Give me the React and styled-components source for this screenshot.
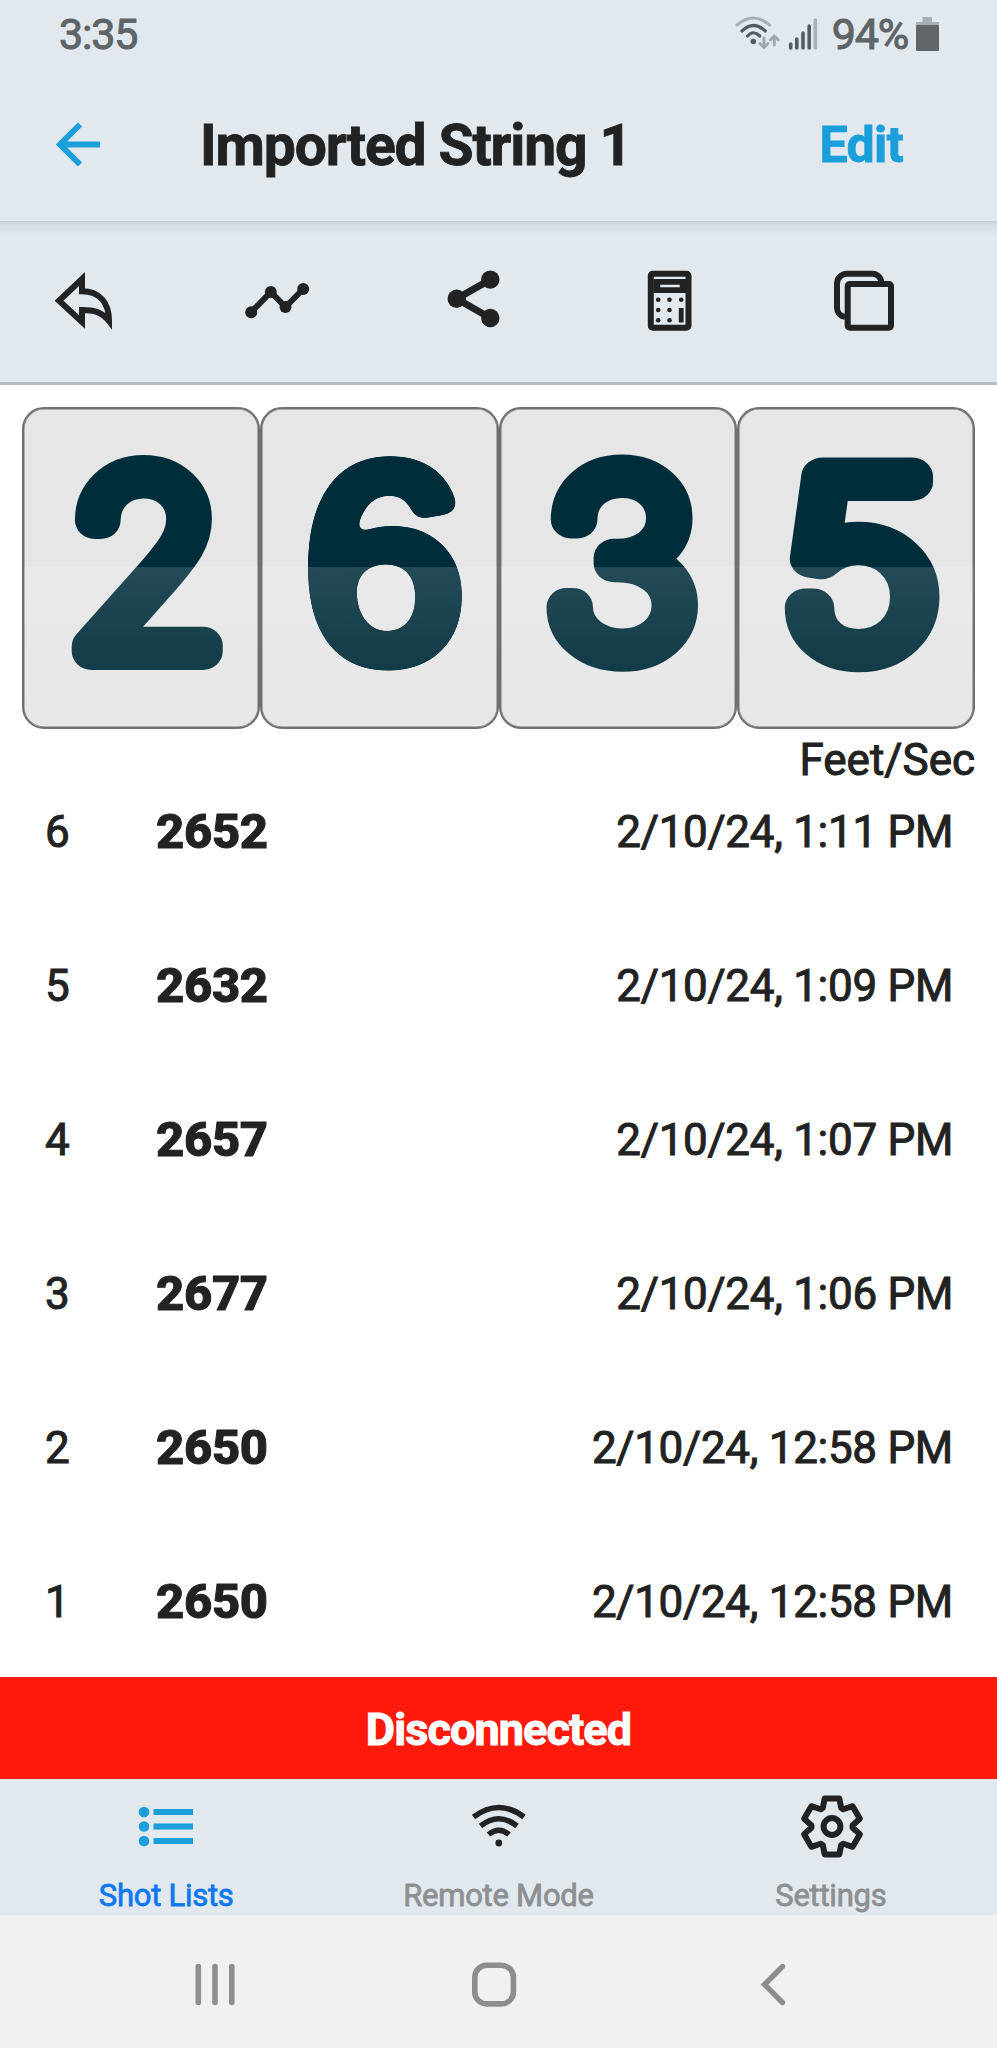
import styled, { createGlobalStyle } from 'styled-components';

const GlobalStyle = createGlobalStyle`
  * {
    box-sizing: border-box;
  }

  body {
    margin: 0;
    background: #ffffff;
    font-family: Roboto, "Liberation Sans", sans-serif;
    color: #222222;
  }
`

const Screen = styled.div`
  display: flex;
  flex-direction: column;
  width: 997px;
  height: 2048px;
  overflow: hidden;
  background: #ffffff;
`

const StatusBar = styled.div`
  display: flex;
  align-items: center;
  height: 68px;
  padding: 0 58px 0 59px;
  background: #e1e8ee;
  color: #5f6467;
  font-size: 43px;
  line-height: 68px;
  font-weight: 400;
  letter-spacing: -1.2px;
  -webkit-text-stroke: 1px #5f6467;

  svg {
    display: block;
  }
`

const Clock = styled.span`
  flex: 1;
`

const Battery = styled.span`
  margin: 0 8px 0 14px;
`

const Header = styled.header`
  display: flex;
  align-items: center;
  height: 153px;
  flex-shrink: 0;
  padding: 0 94px 0 45px;
  background: #e1e8ee;

  h1 {
    flex: 1;
    margin: 2px 0 0 91px;
    font-size: 57px;
    font-weight: 700;
    letter-spacing: -1.15px;
    -webkit-text-stroke: 0.8px #222222;
  }
`

const EditButton = styled.button`
  padding: 0;
  border: 0;
  background: none;
  color: #1a9fda;
  font-family: inherit;
  font-size: 50px;
  font-weight: 700;
  letter-spacing: -0.6px;
  -webkit-text-stroke: 0.8px #1a9fda;
`

const Toolbar = styled.div`
  display: flex;
  gap: 131.5px;
  height: 164px;
  flex-shrink: 0;
  padding: 47px 0 0 51px;
  border-bottom: 3px solid #b6bac1;
  background: linear-gradient(#c6cdd5, #d6dde4 4px, #e1e8ee 16px);
`

const Icon = styled.svg`
  display: block;
  flex-shrink: 0;
  width: 64px;
  height: 64px;
  overflow: visible;
  fill: none;
  stroke: ${props => props.$color || '#222222'};
  stroke-width: ${props => props.$stroke || 6};
  stroke-miterlimit: 10;

  .solid {
    fill: ${props => props.$color || '#222222'};
    stroke: none;
  }
`

const Counter = styled.div`
  display: grid;
  grid-template-columns: repeat(4, 1fr);
  height: 322px;
  flex-shrink: 0;
  margin: 22px 22px 0;
`

const Card = styled.div`
  overflow: hidden;
  border: 2px solid #707070;
  border-radius: 22px;
  background: #e6e6e6;
  box-shadow: inset 0 0 0 0.5px #707070;

  svg {
    display: block;
    margin: -2px 0 0 -2px;
  }
`

const Numeral = styled.text`
  font-family: ${props => props.$soft ? '"Liberation Sans", Arial' : 'Inter, "Liberation Sans"'}, sans-serif;
  font-size: ${props => props.$soft ? '275px' : '240px'};
  font-weight: ${props => props.$soft ? 400 : 100};
  text-anchor: middle;
  fill: #002d3a;
  stroke: #002d3a;
  stroke-width: ${props => props.$soft ? '20px' : '38px'};
  stroke-linejoin: round;
`

const Unit = styled.div`
  height: 62px;
  flex-shrink: 0;
  padding-right: 22px;
  text-align: right;
  font-size: 44px;
  line-height: 62px;
  font-weight: 400;
  -webkit-text-stroke: 1px #222222;
`

const ShotList = styled.ul`
  flex: 1;
  min-height: 0;
  margin: 0;
  padding: 0 44px 0 45px;
  overflow: hidden;
  list-style: none;
`

const ShotRow = styled.li`
  display: flex;
  height: 154px;
  font-size: 44px;
  line-height: 82px;
  font-weight: 400;
  letter-spacing: -0.3px;
  -webkit-text-stroke: 1px #222222;

  .number {
    width: 111px;
  }

  .speed {
    flex: 1;
    font-size: 49px;
    font-weight: 800;
  }
`

const ConnectionBar = styled.div`
  height: 102px;
  flex-shrink: 0;
  padding-top: 3px;
  background: #ff1a0c;
  color: #ffffff;
  text-align: center;
  font-size: 45px;
  line-height: 100px;
  font-weight: 700;
  letter-spacing: -0.9px;
  -webkit-text-stroke: 1px #ffffff;
`

const TabBar = styled.nav`
  display: grid;
  grid-template-columns: repeat(3, 1fr);
  height: 136px;
  flex-shrink: 0;
  background: #e1e8ee;
`

const Tab = styled.div`
  display: flex;
  flex-direction: column;
  align-items: center;
  gap: 17px;
  padding-top: 16px;
  color: ${props => props.$active ? '#0f78ee' : '#8d9092'};
  font-size: 31px;
  line-height: 40px;
  font-weight: 400;
  letter-spacing: -0.25px;
  -webkit-text-stroke: 0.8px currentColor;
`

const SystemNav = styled.div`
  display: flex;
  gap: 215px;
  height: 133px;
  flex-shrink: 0;
  padding: 38px 0 0 183px;
  background: #f1f1f1;
`

const shots = [
  { number: 6, speed: 2652, time: '2/10/24, 1:11 PM' },
  { number: 5, speed: 2632, time: '2/10/24, 1:09 PM' },
  { number: 4, speed: 2657, time: '2/10/24, 1:07 PM' },
  { number: 3, speed: 2677, time: '2/10/24, 1:06 PM' },
  { number: 2, speed: 2650, time: '2/10/24, 12:58 PM' },
  { number: 1, speed: 2650, time: '2/10/24, 12:58 PM' },
];

// the flip digits are not equally wide, so each one has its own stretch
const digits = [
  { value: '2', x: 125, y: 243.5, stretch: 1.055 },
  { value: '6', x: 124, y: 251, stretch: 1.05, soft: true },
  { value: '3', x: 122.5, y: 243.5, stretch: 1.07 },
  { value: '5', x: 123.5, y: 244, stretch: 1.14 },
];

// six teeth, each one turned 60 degrees from the last
function gearPath() {
    const tooth = [[-9.2, -18.5], [-7.3, -28], [7.3, -28], [9.2, -18.5]];
    const points = [];

    for (let i = 0; i < 6; i++) {
        const a = i * Math.PI / 3;
        tooth.forEach(([x, y]) => {
            const px = 33 + x * Math.cos(a) - y * Math.sin(a);
            const py = 31.5 + x * Math.sin(a) + y * Math.cos(a);
            points.push(`${px.toFixed(2)} ${py.toFixed(2)}`);
        });
    }
    return `M${points.join('L')}Z`;
}

function StatusIcons() {
    return (
        <>
            <svg width="46" height="40" viewBox="0 0 46 40" fill="none" strokeLinecap="round">
                <path d="M2 11Q18.3-3 34.7 11" stroke="#a9afb6" strokeWidth="3"/>
                <path d="M7 17Q18.3 6 30.3 17M12.5 22Q18.3 15.5 24.8 22" stroke="#555b60" strokeWidth="3.2"/>
                <circle cx="18.3" cy="27.5" r="2.8" fill="#555b60"/>
                <path d="M29 24V33M25 29.5L29 33.5L33 29.5M39.3 31V22M35.3 26L39.3 22L43.3 26" stroke="#a0a6ad" strokeWidth="2.8"/>
            </svg>
            <svg width="37" height="40" viewBox="-7 0 37 40" fill="none" stroke="#555b60" strokeWidth="3.6" strokeLinecap="round">
                <path d="M2.7 30V34M8.8 25V34M15 19V34M21.2 12V34"/>
                <path d="M27.3 6V34" stroke="#a9afb6"/>
            </svg>
        </>
    )
}

// the soften filter blurs the numeral and cuts it sharp again, which rounds its corners
function Digit({ value, x, y, stretch, soft }) {
    return (
        <Card>
            <svg width="238" height="322" viewBox="0 0 238 322">
                <defs>
                    <linearGradient id="shine" x1="0" y1="0" x2="0" y2="1">
                        <stop offset="0" stopColor="#fff" stopOpacity="0.14"/>
                        <stop offset="1" stopColor="#fff" stopOpacity="0.03"/>
                    </linearGradient>
                    <filter id="soften" filterUnits="userSpaceOnUse" x="0" y="0" width="238" height="322" colorInterpolationFilters="sRGB">
                        <feGaussianBlur stdDeviation="5.5"/>
                        <feComponentTransfer>
                            <feFuncA type="linear" slope="20" intercept="-9.5"/>
                        </feComponentTransfer>
                    </filter>
                </defs>
                <g filter={soft ? 'url(#soften)' : undefined}>
                    <Numeral $soft={soft} transform={`translate(${x} ${y}) scale(${stretch} 1)`}>{value}</Numeral>
                </g>
                <rect x="0" y="160" width="238" height="162" fill="url(#shine)"/>
            </svg>
        </Card>
    )
}

function App() {
    return (
        <Screen>
            <GlobalStyle/>
            <StatusBar>
                <Clock>3:35</Clock>
                <StatusIcons/>
                <Battery>94%</Battery>
                <svg width="23" height="36" viewBox="0 0 23 36">
                    <path d="M6.5 1H16V6H23V10H0V6H6.5Z" fill="#a9afb6"/>
                    <rect x="0" y="9" width="23" height="26" rx="1" fill="#5f6568"/>
                </svg>
            </StatusBar>

            <Header>
                <Icon viewBox="0 0 64 64" $color="#1a9fda">
                    <path d="M55 31.5H15M35 11.5L15 31.5L35 51.5"/>
                </Icon>
                <h1>Imported String 1</h1>
                <EditButton type="button">Edit</EditButton>
            </Header>

            <Toolbar>
                <Icon viewBox="0 0 64 64">
                    <path d="M31 11L8 32.7L31 54V41.9C43 41.9 51 44 58 53C58 35 49 23.2 31 23.2Z"/>
                </Icon>
                <Icon viewBox="0 0 64 64">
                    <path d="M4.2 44.2L23.8 24L38.5 39L56.2 21"/>
                    <circle className="solid" cx="4.2" cy="44.2" r="6"/>
                    <circle className="solid" cx="23.8" cy="24" r="6"/>
                    <circle className="solid" cx="38.5" cy="39" r="6"/>
                    <circle className="solid" cx="56.2" cy="21" r="6"/>
                </Icon>
                <Icon viewBox="0 0 64 64" $stroke={7}>
                    <path d="M48.3 11.6L14.7 30.7L48.3 50"/>
                    <circle className="solid" cx="14.7" cy="30.7" r="9.2"/>
                    <circle className="solid" cx="48.3" cy="11.6" r="9.2"/>
                    <circle className="solid" cx="48.3" cy="50" r="9.2"/>
                </Icon>
                <Icon viewBox="0 0 64 64">
                    <rect x="12.8" y="5.7" width="37.7" height="54" rx="2"/>
                    <path className="solid" d="M15.5 11H48V25H15.5ZM22.2 16.7V19.3H41.8V16.7Z" fillRule="evenodd"/>
                    {[31.7, 42, 52.3].map(y => (
                        <g key={y} className="solid">
                            <circle cx="20.2" cy={y} r="2.3"/>
                            <circle cx="31.5" cy={y} r="2.3"/>
                        </g>
                    ))}
                    <circle className="solid" cx="43.2" cy="31.7" r="2.3"/>
                    <rect className="solid" x="40.8" y="40" width="4.8" height="14.5"/>
                </Icon>
                <Icon viewBox="0 0 64 64">
                    <rect x="14.7" y="16" width="43.3" height="43.7" rx="2"/>
                    <path d="M48.3 15A9 9 0 0 0 39.5 5.7H14A10 10 0 0 0 4 15.7V40A9 9 0 0 0 12 48.8"/>
                </Icon>
            </Toolbar>

            <Counter>
                {digits.map((digit, index) => (
                    <Digit key={index} {...digit}/>
                ))}
            </Counter>
            <Unit>Feet/Sec</Unit>

            <ShotList>
            {
                shots.map(shot => (
                    <ShotRow key={shot.number}>
                        <span className="number">{shot.number}</span>
                        <span className="speed">{shot.speed}</span>
                        <span>{shot.time}</span>
                    </ShotRow>
                ))
            }
            </ShotList>

            <ConnectionBar>Disconnected</ConnectionBar>

            <TabBar>
                <Tab $active>
                    <Icon viewBox="0 0 64 64" $color="#1a9fda">
                        <path d="M19.5 17H59M19.5 31.5H59M19.5 46H59"/>
                        <circle className="solid" cx="10" cy="17" r="5.3"/>
                        <circle className="solid" cx="10" cy="31.5" r="5.3"/>
                        <circle className="solid" cx="10" cy="46" r="5.3"/>
                    </Icon>
                    Shot Lists
                </Tab>
                <Tab>
                    <Icon viewBox="0 0 64 64" $stroke={5.5}>
                        <path d="M7.5 22Q32.8 3 58 22M14.5 31Q32.8 16.5 51 31M22.5 39.5Q32.8 31 43 39.5"/>
                        <circle className="solid" cx="32.8" cy="48" r="3.4"/>
                    </Icon>
                    Remote Mode
                </Tab>
                <Tab>
                    <Icon viewBox="0 0 64 64" strokeLinejoin="round">
                        <path d={gearPath()}/>
                        <circle cx="33" cy="31.5" r="8.4"/>
                    </Icon>
                    Settings
                </Tab>
            </TabBar>

            <SystemNav>
                <Icon viewBox="0 0 64 64" $color="#8e8e8e" $stroke={5.6} strokeLinecap="round">
                    <path d="M15.3 13.5V49.5M32 13.5V49.5M48.8 13.5V49.5"/>
                </Icon>
                <Icon viewBox="0 0 64 64" $color="#8e8e8e" $stroke={5.6}>
                    <rect x="12.8" y="12.3" width="38.6" height="38.6" rx="12"/>
                </Icon>
                <Icon viewBox="0 0 64 64" $color="#8e8e8e" $stroke={5.4} strokeLinecap="round">
                    <path d="M41.5 13.5L23.5 31.5L41.5 49.5"/>
                </Icon>
            </SystemNav>
        </Screen>
    )
}

export default App
